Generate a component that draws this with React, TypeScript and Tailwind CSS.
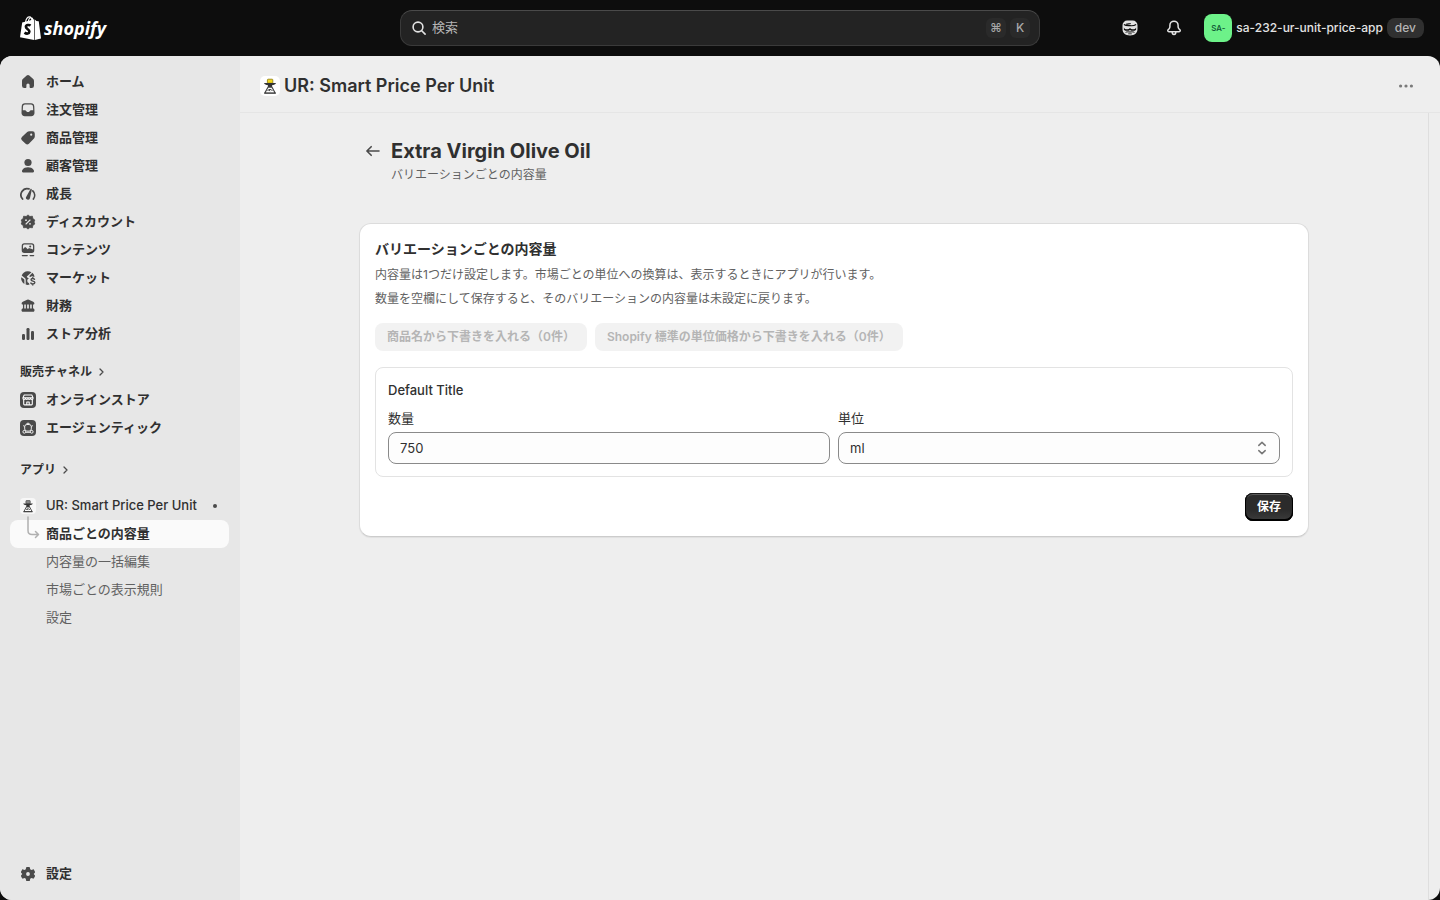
import type { ReactNode } from "react";

const FONT = "font-['Inter','Noto_Sans_CJK_JP',sans-serif]";

function Icon({ children }: { children: ReactNode }) {
  return (
    <svg viewBox="0 0 16 16" className="size-4 shrink-0" fill="currentColor" aria-hidden="true">
      {children}
    </svg>
  );
}

const HomeIcon = () => (
  <Icon>
    <path d="M8 1.1c-.5 0-1 .2-1.3.5L2.8 5.1C2.3 5.6 2 6.2 2 6.9v4.8A2.3 2.3 0 0 0 4.3 14h1.3a.8.8 0 0 0 .8-.8V11a1.6 1.6 0 0 1 3.2 0v2.2c0 .4.4.8.8.8h1.3a2.3 2.3 0 0 0 2.3-2.3V6.9c0-.7-.3-1.3-.8-1.8L9.3 1.6C9 1.3 8.5 1.1 8 1.1Z" />
  </Icon>
);

const OrdersIcon = () => (
  <Icon>
    <path
      fillRule="evenodd"
      d="M5 1.300h6a3.300 3.300 0 0 1 3.300 3.100l.2 6.300A3.300 3.300 0 0 1 11.200 14.300H4.800A3.300 3.300 0 0 1 1.500 10.700l.2-6.300A3.300 3.300 0 0 1 5 1.300Zm0 1.300A2 2 0 0 0 3 4.500L2.800 8.200h2.300c.4 0 .7.2.9.500.4.9 1.100 1.400 2 1.400s1.600-.5 2-1.400c.2-.3.500-.5.900-.5h2.300L13 4.500a2 2 0 0 0-2-1.900H5Z"
    />
  </Icon>
);

const ProductsIcon = () => (
  <Icon>
    <path
      fillRule="evenodd"
      d="M9.300 1.300h3.100a2.400 2.400 0 0 1 2.400 2.400v2.900c0 .7-.3 1.400-.8 1.900l-5.100 5.300a2.400 2.400 0 0 1-3.300 0L1.900 10.300a2.300 2.300 0 0 1 0-3.300l5.300-4.900a2.900 2.900 0 0 1 2.100-.8Zm1.900 4.500a1.100 1.100 0 1 0 0-2.200 1.100 1.100 0 0 0 0 2.200Z"
    />
  </Icon>
);

const CustomersIcon = () => (
  <Icon>
    <circle cx="8" cy="4.500" r="3.600" />
    <path d="M8 9.300c-2.400 0-4.300.8-5.300 2.100-.6.700-.9 1.300-.7 2 .2.600.8 1.100 1.500 1.100h9c.7 0 1.300-.5 1.500-1.100.2-.7-.1-1.300-.7-2C12.300 10.100 10.400 9.300 8 9.300Z" />
  </Icon>
);

const GrowthIcon = () => (
  <Icon>
    <path
      d="M2.600 13A6.200 6.200 0 0 1 9 2.900M12.800 4.900A6.200 6.200 0 0 1 13.400 13"
      fill="none"
      stroke="currentColor"
      strokeWidth="1.700"
      strokeLinecap="round"
    />
    <path d="M11.400 2.900c.4.200.5.500.4.900L10 11.900a2 2 0 1 1-3.600-1.500l4-7.200c.2-.4.600-.5 1-.3Z" />
  </Icon>
);

const DiscountIcon = () => (
  <Icon>
    <path
      d="m8 .9 1.900 1.600 2.500-.3.4 2.400 2 1.400L14 8l.8 2-2 1.400-.4 2.400-2.500-.3L8 15.100l-1.900-1.600-2.500.3-.4-2.400-2-1.400L2 8l-.8-2 2-1.400.4-2.400 2.500.3Z"
      stroke="currentColor"
      strokeWidth=".8"
      strokeLinejoin="round"
    />
    <path d="m6 10 4-4" stroke="#e7e7e7" strokeWidth="1.100" strokeLinecap="round" />
    <circle cx="6" cy="6.200" r=".9" fill="#e7e7e7" />
    <circle cx="10" cy="9.800" r=".9" fill="#e7e7e7" />
  </Icon>
);

const ContentIcon = () => (
  <Icon>
    <path
      fillRule="evenodd"
      d="M4.300 1.300h7.400a2.600 2.600 0 0 1 2.600 2.600v4.400a2.600 2.600 0 0 1-2.600 2.600H4.300a2.600 2.600 0 0 1-2.600-2.600V3.900a2.600 2.600 0 0 1 2.600-2.600Zm.2 1.300c-.9 0-1.500.6-1.500 1.500v2.800l1.300-1.200c.6-.5 1.400-.5 1.900 0l1.500 1.500.8-.7c.6-.5 1.400-.5 1.900.1L13 7.600V4.100c0-.9-.6-1.500-1.500-1.500Zm5.700 3a1 1 0 1 0 0-2 1 1 0 0 0 0 2Z"
    />
    <path d="M2.400 13.600h4.800M10.200 13.600h3.400" stroke="currentColor" strokeWidth="1.400" strokeLinecap="round" />
  </Icon>
);

const MarketsIcon = () => (
  <Icon>
    <path d="M7.600 1.200a6.900 6.900 0 0 0-5.900 4.200l3.100 2.500c.6.500.9 1 .9 1.800v4.900c1.300.4 2.700.4 3.900 0l-.8-1.500a2.500 2.500 0 0 1 .1-4.700L7.300 7.600c-.5-.3-.6-.9-.2-1.300l4.400-4.100a7 7 0 0 0-3.900-1Z" />
    <path d="M1.200 7.200c-.4 2.700.8 5.300 3.200 6.800v-3.600c0-.6-.2-1-.6-1.300Z" />
    <path d="m12.400 2.800-3.300 3.500 1.300.7c.8-.9 1.900-1 2.800-.3l1.400.1a6.900 6.900 0 0 0-2.200-4Z" />
    <path
      d="M14.600 9.300c-.5-.6-1.100-.8-1.800-.8-1 0-1.800.5-1.800 1.300 0 1.800 3.900.9 3.900 2.800 0 .8-.8 1.400-2 1.400-.9 0-1.600-.3-2.100-1M12.800 7.400v1.100M12.800 14v1"
      fill="none"
      stroke="currentColor"
      strokeWidth="1.300"
      strokeLinecap="round"
    />
  </Icon>
);

const FinanceIcon = () => (
  <Icon>
    <path d="M7.100 1.700a2 2 0 0 1 1.800 0l4.300 2.100c.8.400 1.200 1 1.200 1.700 0 .6-.4 1-1 1H2.600c-.6 0-1-.4-1-1 0-.7.4-1.300 1.200-1.700Z" />
    <path d="M3.600 6v5M6.500 6v5M9.500 6v5M12.400 6v5" stroke="currentColor" strokeWidth="1.300" />
    <path d="M2.900 10.600h10.200c.9 0 1.400.7 1.400 1.700 0 .9-.4 1.500-1.200 1.500H2.700c-.8 0-1.200-.6-1.200-1.500 0-1 .5-1.700 1.400-1.700Z" />
  </Icon>
);

const AnalyticsIcon = () => (
  <Icon>
    <rect x="2" y="8" width="3" height="6" rx="1.200" />
    <rect x="6.500" y="2" width="3" height="12" rx="1.200" />
    <rect x="11" y="5" width="3" height="9" rx="1.200" />
  </Icon>
);

const GearIcon = () => (
  <Icon>
    <path
      fillRule="evenodd"
      d="M6.900 1h2.200c.4 0 .7.3.8.6l.3 1.600 1.200.7 1.500-.5c.4-.1.8 0 1 .4l1.100 1.900c.2.400.1.800-.2 1L13.700 8l1.100 1.300c.3.200.4.600.2 1l-1.100 1.900c-.2.400-.6.500-1 .4l-1.500-.5-1.200.7-.3 1.600c-.1.300-.4.600-.8.600H6.900c-.4 0-.7-.3-.8-.6l-.3-1.600-1.200-.7-1.500.5c-.4.1-.8 0-1-.4L1 10.300c-.2-.4-.1-.8.2-1L2.300 8 1.200 6.700c-.3-.2-.4-.6-.2-1l1.100-1.900c.2-.4.6-.5 1-.4l1.500.5 1.200-.7.300-1.600c.1-.3.400-.6.800-.6ZM8 9.900a1.900 1.900 0 1 0 0-3.800 1.900 1.900 0 0 0 0 3.800Z"
    />
  </Icon>
);

const StoreIcon = () => (
  <Icon>
    <rect width="16" height="16" rx="4" />
    <path
      d="M4.200 3h7.600l1.300 2.900c0 1.900-2.400 1.900-2.600.3-.2 1.500-2.300 1.500-2.500 0-.2 1.500-2.300 1.500-2.500 0-.2 1.600-2.600 1.600-2.600-.3ZM2.900 5.700h10.200M3.700 7.700v4.400c0 .5.300.8.800.8h7c.5 0 .8-.3.800-.8V7.700M6.800 12.800V10h2.400v2.800"
      fill="none"
      stroke="#fff"
      strokeWidth="1.100"
      strokeLinejoin="round"
    />
  </Icon>
);

const AgenticIcon = () => (
  <Icon>
    <rect width="16" height="16" rx="4" />
    <g fill="none" stroke="#f0f0f0" strokeWidth="1">
      <rect x="4.700" y="4.500" width="6.600" height="6.600" rx="2.200" />
      <path d="M6.200 4.200a1.900 1.500 0 0 1 3.600 0M6 12.300h4" />
      <circle cx="4.300" cy="11.800" r="1.400" />
      <circle cx="11.700" cy="11.800" r="1.400" />
      <path d="M4.700 6.500 3.200 5.600M11.300 6.500l1.500-.9" />
    </g>
  </Icon>
);

function ScaleIcon({ color, className }: { color: boolean; className: string }) {
  return (
    <svg viewBox="0 0 20 20" className={className} aria-hidden="true">
      <rect width="20" height="20" rx="5" fill={color ? "#fff" : "#f7f7f7"} />
      <rect x="7.400" y="3.200" width="5.400" height="4" rx=".7" fill={color ? "#f3d81e" : "#888"} stroke={color ? "#8a7a10" : "#444"} strokeWidth=".8" />
      <path d="M4 7h12c-.5 1.400-2 2-4 2.200l.2 2H7.800l.2-2C6 9 4.500 8.400 4 7Z" fill="#333" />
      <path d="M8 11.200h4l3.200 5.800H4.800Z" fill="#fff" stroke="#444" strokeWidth="1.200" strokeLinejoin="round" />
      <path d="M7.600 15a2.600 2.600 0 0 1 4.800 0M10 15.200l-1-1.700M4.200 17.200h11.600" fill="none" stroke="#333" strokeWidth=".9" />
    </svg>
  );
}

const Chevron = () => (
  <svg viewBox="0 0 8 8" className="size-2" fill="none" stroke="#4a4a4a" strokeWidth="1.300" strokeLinecap="round" strokeLinejoin="round" aria-hidden="true">
    <path d="m2 1 3 3-3 3" />
  </svg>
);

const mainNav = [
  { label: "ホーム", icon: <HomeIcon /> },
  { label: "注文管理", icon: <OrdersIcon /> },
  { label: "商品管理", icon: <ProductsIcon /> },
  { label: "顧客管理", icon: <CustomersIcon /> },
  { label: "成長", icon: <GrowthIcon /> },
  { label: "ディスカウント", icon: <DiscountIcon /> },
  { label: "コンテンツ", icon: <ContentIcon /> },
  { label: "マーケット", icon: <MarketsIcon /> },
  { label: "財務", icon: <FinanceIcon /> },
  { label: "ストア分析", icon: <AnalyticsIcon /> },
];

const channels = [
  { label: "オンラインストア", icon: <StoreIcon /> },
  { label: "エージェンティック", icon: <AgenticIcon /> },
];

const appPages = ["内容量の一括編集", "市場ごとの表示規則", "設定"];

function NavItem({ label, icon }: { label: string; icon: ReactNode }) {
  return (
    <a href="#" className="flex h-7 items-center gap-2.5 rounded-lg px-2.5 text-[13px] font-semibold text-[#303030]">
      <span className="text-[#4a4a4a]">{icon}</span>
      {label}
    </a>
  );
}

function NavHeading({ label }: { label: string }) {
  return (
    <a href="#" className="flex h-7 items-center gap-1.5 px-2.5 text-xs font-semibold text-[#303030]">
      {label}
      <Chevron />
    </a>
  );
}

function Logo() {
  return (
    <a href="#" className="flex items-center gap-[3px] text-white" aria-label="Shopify">
      <svg viewBox="0 0 21 24" className="h-6 w-[21px]" aria-hidden="true">
        <path d="M5.500 6.300C6 3.300 7.800.9 9.600.9c1.600 0 2.200 1.900 2.300 4M8.300 5.600c.3-2.200 1.600-4 3-3.900.9 0 1.500 1 1.700 2.600" fill="none" stroke="#fff" strokeWidth="1.100" />
        <path d="M2.200 6.500 14.200 3.200V24L0 21.300Z" fill="#fff" />
        <path d="m14.800 3.400 1.600 1.600 2 .2c.3 0 .4.200.4.400L21 22.500 14.800 24Z" fill="#fff" />
        <path d="M10.600 9.500c-1.200-.8-4.600-.9-4.700 1.300-.1 2.400 3.700 2.600 3.500 4.900-.2 2.100-2.700 2.500-4.900.9" fill="none" stroke="#0d0d0d" strokeWidth="2.600" />
      </svg>
      <span className="font-['Open_Sans','Noto_Sans',sans-serif] text-lg leading-6 font-bold italic" aria-hidden="true">
        shopify
      </span>
    </a>
  );
}

function TopBar() {
  return (
    <header className="grid h-14 shrink-0 grid-cols-[1fr_minmax(0,640px)_1fr] items-center">
      <div className="pl-5">
        <Logo />
      </div>
      <label className="flex h-9 items-center gap-1.5 rounded-xl border border-[#3a3a3a] border-t-[#4a4a4a] bg-[#232323] pr-[9px] pl-[11px]">
        <svg viewBox="0 0 14 14" className="size-3.5" fill="none" stroke="#e3e3e3" strokeWidth="1.600" strokeLinecap="round" aria-hidden="true">
          <circle cx="6" cy="6" r="4.900" />
          <path d="m9.700 9.700 3.400 3.400" />
        </svg>
        <input
          type="search"
          aria-label="検索"
          placeholder="検索"
          className="min-w-0 flex-1 bg-transparent text-[13px] text-white outline-none placeholder:text-[#b5b5b5]"
        />
        <span className="flex gap-1 text-xs font-medium text-[#a8a8a8]">
          <kbd className={`grid size-5 place-items-center rounded-md bg-[#2a2a2a] ${FONT}`}>⌘</kbd>
          <kbd className={`grid size-5 place-items-center rounded-md bg-[#2a2a2a] ${FONT}`}>K</kbd>
        </span>
      </label>
      <div className="flex items-center justify-end pr-4">
        <button type="button" aria-label="Sidekick" className="grid size-7 place-items-center">
          <svg viewBox="0 0 16 16" className="size-4" aria-hidden="true">
            <path d="M5.200.6h5.600A4.700 4.700 0 0 1 15.500 5.300V9c0 3.900-2.800 6.400-7.500 6.400S.5 12.900.5 9V5.300A4.700 4.700 0 0 1 5.200.6Z" fill="#e3e3e3" />
            <path d="M1.900 4.400c2.300 1.500 4.500 1.100 6.300 1.300 2 .2 4.300-.2 5.900-1.300M4.200 4.200c1.500-.8 3.200-.1 4.500-.7" fill="none" stroke="#0d0d0d" strokeWidth="1.200" />
            <path d="M1.900 7.400c.6 2.300 4.900 2.400 6.100.5 1.200 1.900 5.500 1.800 6.100-.5v2.300c-1.300 1.500-4.700 1.500-6.100.3-1.400 1.200-4.800 1.200-6.100-.3Z" fill="#0d0d0d" />
            <path d="M3.600 12.400c1.500-.9 2.900-.4 4.400-.4s2.900-.5 4.400.4" fill="none" stroke="#0d0d0d" strokeWidth="1" />
            <path d="M6.200 13.800h3.600" stroke="#0d0d0d" strokeWidth=".8" />
          </svg>
        </button>
        <button type="button" aria-label="通知" className="ml-4 grid size-7 place-items-center">
          <svg viewBox="0 0 16 16" className="size-4" fill="none" stroke="#e3e3e3" strokeWidth="1.500" strokeLinejoin="round" strokeLinecap="round" aria-hidden="true">
            <path d="M8 1.200A4.100 4.100 0 0 0 3.900 5.300v1.500c0 .7-.3 1.300-.8 1.900l-1 1.100c-.7.800-.3 1.900.8 1.900h10.200c1.100 0 1.500-1.100.8-1.900l-1-1.100c-.5-.6-.8-1.200-.8-1.900V5.300A4.100 4.100 0 0 0 8 1.200Z" />
            <path d="M6.200 12.200a1.800 2.200 0 0 0 3.600 0" />
          </svg>
        </button>
        <button type="button" className="ml-4 flex items-center gap-1 text-xs font-medium text-[#e3e3e3]">
          <span className="grid size-7 place-items-center rounded-lg bg-[#6df289] text-[8px] text-[#0c5132]">SA-</span>
          <span className="whitespace-nowrap">sa-232-ur-unit-price-app</span>
          <span className="rounded-lg bg-[#303030] px-2 py-0.5 text-[#b5b5b5]">dev</span>
        </button>
      </div>
    </header>
  );
}

function Sidebar() {
  return (
    <nav className="flex w-60 shrink-0 flex-col bg-[#e7e7e7] py-3 pr-[11px] pl-2.5">
      {mainNav.map((item) => (
        <NavItem key={item.label} {...item} />
      ))}
      <div className="mt-2.5">
        <NavHeading label="販売チャネル" />
        {channels.map((item) => (
          <NavItem key={item.label} {...item} />
        ))}
      </div>
      <div className="mt-3.5">
        <NavHeading label="アプリ" />
      </div>
      <div className="mt-2 text-[13px]">
        <a href="#" className="flex h-7 items-center gap-2.5 px-2.5 font-medium text-[#303030]">
          <ScaleIcon color={false} className="size-4" />
          <span className="flex-1">UR: Smart Price Per Unit</span>
          <span className="mr-0.5 size-1 rounded-full bg-[#4a4a4a]" />
        </a>
        <a href="#" className="relative flex h-7 items-center rounded-lg bg-[#fafafa] pl-9 font-semibold text-[#303030]">
          <svg viewBox="0 0 14 24" className="absolute -top-1 left-4 h-6 w-3.5" fill="none" stroke="#b0b0b0" strokeWidth="1.500" strokeLinecap="round" strokeLinejoin="round" aria-hidden="true">
            <path d="M2 1v13.500c0 2.500 1.500 4 4 4h6M9.500 15.500l3 3-3 3" />
          </svg>
          商品ごとの内容量
        </a>
        {appPages.map((label) => (
          <a key={label} href="#" className="flex h-7 items-center pl-9 text-[#616161]">
            {label}
          </a>
        ))}
      </div>
      <div className="mt-auto">
        <NavItem label="設定" icon={<GearIcon />} />
      </div>
    </nav>
  );
}

function VariantCard() {
  const draft = "h-7 rounded-lg bg-[#f2f2f2] px-3 text-xs font-semibold text-[#b5b5b5]";
  const field = "h-8 w-full rounded-lg border border-[#8a8a8a] bg-[#fdfdfd] px-[11px] text-[13px] text-[#303030]";
  return (
    <section className="mt-[38px] rounded-xl border border-[#dcdcdc] border-b-[#cccccc] bg-white p-[15px] shadow-[0_1px_1px_rgba(0,0,0,0.06)]">
      <h2 className="text-sm leading-5 font-semibold text-[#303030]">バリエーションごとの内容量</h2>
      <div className="mt-1.5 flex flex-col gap-1 text-xs leading-5 text-[#616161]">
        <p>内容量は1つだけ設定します。市場ごとの単位への換算は、表示するときにアプリが行います。</p>
        <p>数量を空欄にして保存すると、そのバリエーションの内容量は未設定に戻ります。</p>
      </div>
      <div className="mt-3.5 flex flex-wrap gap-2">
        <button type="button" disabled className={draft}>
          商品名から下書きを入れる（0件）
        </button>
        <button type="button" disabled className={draft}>
          Shopify 標準の単位価格から下書きを入れる（0件）
        </button>
      </div>
      <div className="mt-4 rounded-lg border border-[#e3e3e3] p-3 text-[13px] leading-5 text-[#303030]">
        <h3 className="font-medium">Default Title</h3>
        <div className="mt-2 grid grid-cols-2 gap-2">
          <div>
            <label htmlFor="amount" className="mb-1 block">数量</label>
            <input id="amount" type="text" inputMode="decimal" defaultValue="750" className={field} />
          </div>
          <div>
            <label htmlFor="unit" className="mb-1 block">単位</label>
            <div className="relative">
              <select id="unit" defaultValue="ml" className={`${field} appearance-none`}>
                <option value="ml">ml</option>
              </select>
              <svg viewBox="0 0 16 16" className="pointer-events-none absolute top-2 right-2.5 size-4" fill="none" stroke="#777" strokeWidth="1.500" strokeLinecap="round" strokeLinejoin="round" aria-hidden="true">
                <path d="m4.800 5.400 3.200-3 3.200 3M4.800 10.600l3.200 3 3.200-3" />
              </svg>
            </div>
          </div>
        </div>
      </div>
      <div className="mt-4 flex justify-end">
        <button
          type="button"
          className="h-7 rounded-lg bg-linear-to-b from-[#2b2b2b] from-60% to-[#3c3c3c] px-3 text-xs font-semibold text-white shadow-[inset_0_-1px_0_1px_#000,inset_0_0_0_1px_#1a1a1a,inset_0_2px_0_0_#5a5a5a]"
        >
          保存
        </button>
      </div>
    </section>
  );
}

export default function App() {
  return (
    <div className={`flex h-screen flex-col bg-[#0d0d0d] ${FONT}`}>
      <TopBar />
      <div className="flex min-h-0 flex-1 overflow-hidden rounded-xl bg-[#eeeeee]">
        <Sidebar />
        <div className="flex min-w-0 flex-1 flex-col">
          <div className="flex h-[57px] shrink-0 items-center gap-1 border-b border-[#e5e5e5] pt-1 pr-6 pl-5">
            <ScaleIcon color className="size-5" />
            <h1 className="flex-1 text-lg font-semibold text-[#303030]">UR: Smart Price Per Unit</h1>
            <button type="button" aria-label="その他の操作" className="grid h-7 w-5 place-items-center">
              <svg viewBox="0 0 16 16" className="size-4" fill="#7a7a7a" aria-hidden="true">
                <circle cx="2.600" cy="8" r="1.600" />
                <circle cx="8" cy="8" r="1.600" />
                <circle cx="13.400" cy="8" r="1.600" />
              </svg>
            </button>
          </div>
          <main className="mr-[11px] min-h-0 flex-1 overflow-auto border-r border-[#dedede]">
            <div className="mx-auto w-full max-w-[950px] pt-[26px]">
              <div className="flex gap-1">
                <button type="button" aria-label="戻る" className="grid h-6 w-7 place-items-center">
                  <svg viewBox="0 0 16 16" className="size-4" fill="none" stroke="#4a4a4a" strokeWidth="1.600" strokeLinecap="round" strokeLinejoin="round" aria-hidden="true">
                    <path d="M14 8H2M6.200 3.700 1.900 8l4.300 4.300" />
                  </svg>
                </button>
                <div>
                  <h2 className="text-xl leading-6 font-bold text-[#303030]">Extra Virgin Olive Oil</h2>
                  <p className="mt-0.5 text-xs leading-5 text-[#616161]">バリエーションごとの内容量</p>
                </div>
              </div>
              <VariantCard />
            </div>
          </main>
        </div>
      </div>
    </div>
  );
}
